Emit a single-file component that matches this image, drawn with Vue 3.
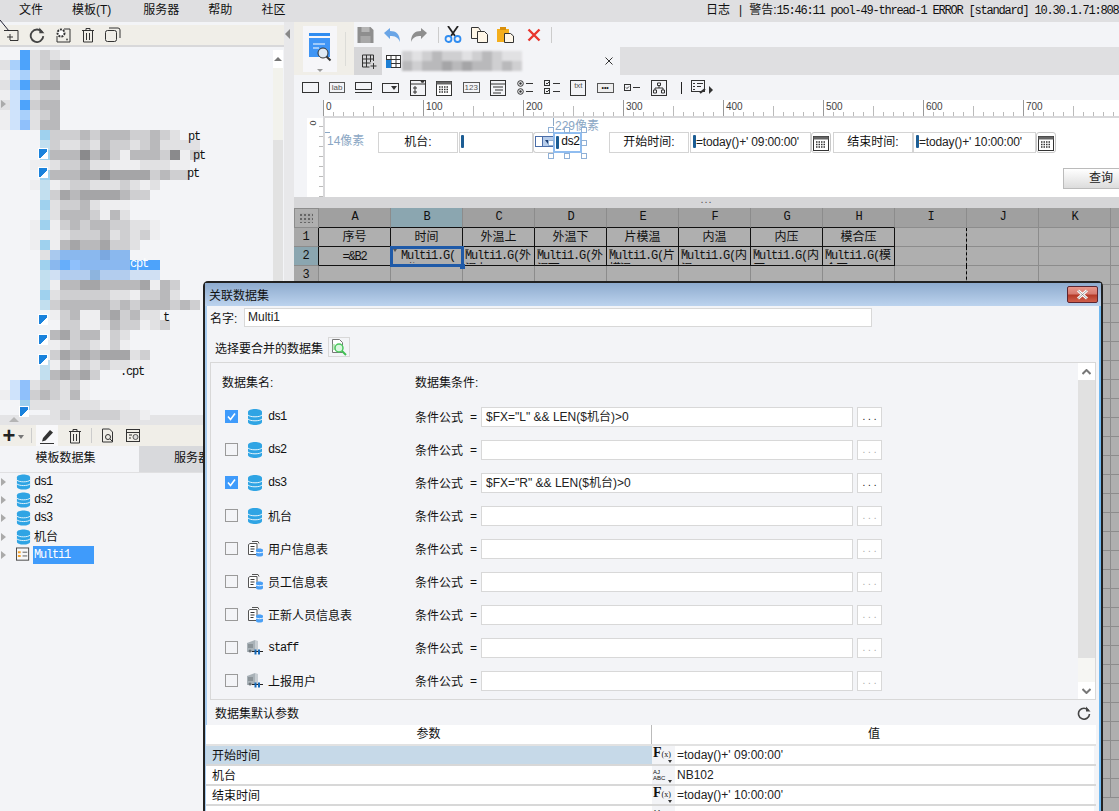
<script setup>
const menus = ['文件', '模板(T)', '服务器', '帮助', '社区']

const palette = {
  a: '#eeeef0', b: '#e1e1e3', c: '#cfcfd1', d: '#b9b9bb', e: '#a5a5a7', f: '#8a8a8c',
  B: '#4da3fb', L: '#a9d0fb', M: '#cfe3fb', H: '#8fc0fb', S: '#9fd1ee', T: '#c2dfef',
  P: '#a9c9ee', Q: '#8ab8ee', R: '#7ba8e0', O: '#66aefb', U: '#8fc0fb', W: '#8ab8f0',
  X: '#d0e0f3', Y: '#b3cdee', Z: '#8db4de'
}
const mosaicRows = [
  '..Bbcba.............', 'bLBbcde.............', 'aMLbbc..............', 'bLBdee..............',
  'aMLbcc..............', 'bMBcdd..............', 'aMLbcd..............', 'aMHbdd..............',
  '....Scccdcdddccdcb..', '....Tcbbcbdccbcdbbbb', '....Sdddfdecadddcfac', '...aabccdbbaaabbbaa.',
  '....Sdddeefeeeecdcc.', '...aTabccbbbcbab....', '....Tcedeeeedcc.....', '....Sbccdbaaa.......',
  '....Tbdddcadb.......', '...aSacdcddccbba....', '...aaabcccdbcbca....', '...aSadeddeccb......',
  '....bPQQQQRQQ.......', '....SQOUWWWWWBBB....', '....TXYYYZYYYXXX....', '....Taddeeddddeadc..',
  '....Sbcccccbbaccdb..', '....Tcdddddcdcdddcdc', '.....acdaadecdbb....', '......ccaabdccabc...',
  '.....decddacb.......', '....aabccbaca.......', '.....cededeeebc.....', '....Tacacbcbbaa.....',
  '....Tdedec..........', '.MHbccbca...........', 'aMHcdcbda...........', '..Sbbbbbbbaaa.......',
  '.....bcbccccbba.....'
]
const mosaic = mosaicRows.join('').split('').map((c) => palette[c] || 'transparent')
const tabMosaic = 'cbcdccbcdcbb'.split('').concat('dcddededdcdc'.split('')).map((c) => palette[c])

const treeRows = [
  { name: 'ds1', icon: 'db' }, { name: 'ds2', icon: 'db' }, { name: 'ds3', icon: 'db' },
  { name: '机台', icon: 'db', cjk: true }, { name: 'Multi1', icon: 'multi', picked: true }
]

const cols = ['A', 'B', 'C', 'D', 'E', 'F', 'G', 'H', 'I', 'J', 'K', 'L']
const heads = ['序号', '时间', '外温上', '外温下', '片模温', '内温', '内压', '模合压']
const forms = ['=&B2', 'Multi1.G(时间)', 'Multi1.G(外温上)', 'Multi1.G(外温下)', 'Multi1.G(片模温)', 'Multi1.G(内温)', 'Multi1.G(内压)', 'Multi1.G(模合压)']
const rowNums = Array.from({ length: 30 }, (_, i) => i + 1)

const datasets = [
  { name: 'ds1', icon: 'db', on: true, f: '$FX="L" && LEN($机台)>0', mono: true, live: true },
  { name: 'ds2', icon: 'db', on: false, f: '', mono: true },
  { name: 'ds3', icon: 'db', on: true, f: '$FX="R" && LEN($机台)>0', mono: true, live: true },
  { name: '机台', icon: 'db', on: false, f: '' },
  { name: '用户信息表', icon: 'tbl', on: false, f: '' },
  { name: '员工信息表', icon: 'tbl', on: false, f: '' },
  { name: '正新人员信息表', icon: 'tbl', on: false, f: '' },
  { name: 'staff', icon: 'srv', on: false, f: '', mono: true },
  { name: '上报用户', icon: 'srv', on: false, f: '' }
]

const params = [
  { k: '开始时间', v: "=today()+' 09:00:00'", t: 'fx', picked: true },
  { k: '机台', v: 'NB102', t: 'abc' },
  { k: '结束时间', v: "=today()+' 10:00:00'", t: 'fx' }
]
</script>

<template>
  <div class="app">
    <svg class="defs" width="0" height="0">
      <symbol id="db" viewBox="0 0 16 16">
        <path d="M1 3c0-4 14-4 14 0v10c0 4-14 4-14 0z" fill="#2fa4e4" />
        <path d="M1 6c2 2.400 12 2.400 14 0M1 10c2 2.400 12 2.400 14 0" fill="none" stroke="#e6f4fb" stroke-width="1" />
      </symbol>
      <symbol id="tbl" viewBox="0 0 16 16">
        <path d="M3 2.500h7v11H1.500v-10zM5 .5h6l1 2" fill="#fff" stroke="#555" />
        <path d="M3.500 5.500h4M3.500 8h4M3.500 10.500h3" stroke="#333" />
        <path d="M9 9c0-2 7-2 7 0v5c0 2-7 2-7 0z" fill="#4a9ff5" />
        <path d="M9 11c1 1 6 1 7 0" stroke="#fff" fill="none" />
      </symbol>
      <symbol id="srv" viewBox="0 0 16 16">
        <path d="M0 3l8-3v12H0z" fill="#a9b2b8" />
        <path d="M8 0l3 1v11H8z" fill="#c7cdd2" />
        <path d="M1 5h5M1 7h5" stroke="#6c7479" />
        <circle cx="3" cy="11" r="1.500" fill="#6c7479" />
        <path d="M5 11.500h11" stroke="#222" />
        <path d="M7.500 9.500h2v5h-2zM11 9.500h2v5h-2z" fill="#1669b8" />
      </symbol>
      <symbol id="multi" viewBox="0 0 16 16">
        <rect x=".5" y=".5" width="13" height="13" fill="#f8f8f8" stroke="#444" />
        <path d="M2 5h3M2 9h3" stroke="#f2a12e" stroke-width="2" />
        <path d="M7 5h5M7 9h5" stroke="#555" />
      </symbol>
      <symbol id="cal" viewBox="0 0 16 16">
        <rect x=".5" y="1.500" width="15" height="14" fill="#fff" stroke="#333" />
        <rect x=".5" y="1.500" width="15" height="3" fill="#666" />
        <path d="M3 7h10M3 9.500h10M3 12h10" stroke="#333" stroke-dasharray="1.500 1" stroke-width="1.500" />
      </symbol>
      <symbol id="reload" viewBox="0 0 14 14">
        <path d="M11.500 4.500A5.500 5.500 0 1 0 12.500 8" fill="none" stroke="#444" stroke-width="1.600" />
        <path d="M9 .5v5h4.500z" fill="#444" />
      </symbol>
      <symbol id="trash" viewBox="0 0 14 16">
        <path d="M1 3.500h12M5 3.500v-2h4v2M2.500 3.500v11.500h9V3.500M5.500 6v7M8.500 6v7" fill="none" stroke="#333" />
      </symbol>
      <symbol id="zoomdoc" viewBox="0 0 18 18">
        <path d="M2.500 1.500h7l3 3v10h-10z" fill="#fff" stroke="#777" />
        <path d="M2 7h3M2 9h3M2 11h3" stroke="#8c8" />
        <circle cx="9" cy="10" r="4" fill="#d9f7df" stroke="#4cc85e" stroke-width="1.500" />
        <path d="M12 13l4 4" stroke="#3fbf52" stroke-width="2" />
      </symbol>
    </svg>

    <header class="menubar">
      <nav class="menus"><span v-for="m in menus" :key="m" class="menu">{{ m }}</span></nav>
      <div class="log">日志<span class="logbar">|</span>警告:<span class="mono">15:46:11 pool-49-thread-1 ERROR [standard] 10.30.1.71:808</span></div>
    </header>

    <div class="main">
      <aside class="left">
        <div class="lefttop">
          <svg width="16" height="16" viewBox="0 0 16 16" class="lt1"><path d="M1 3.500h14v10H7M7 7v6M4 10h6" fill="none" stroke="#333" /></svg>
          <svg width="16" height="16"><use href="#reload" /></svg>
          <svg width="16" height="16" viewBox="0 0 16 16"><path d="M9 2h6v13H2V9" fill="none" stroke="#333" /><circle cx="6" cy="6" r="3.500" fill="#fff" stroke="#333" stroke-width="2" stroke-dasharray="2 1" /><circle cx="12" cy="12.500" r="1" fill="#555" /></svg>
          <svg width="14" height="16"><use href="#trash" /></svg>
          <svg width="16" height="16" viewBox="0 0 16 16"><rect x=".5" y="3.500" width="11" height="11" rx="2" fill="none" stroke="#333" /><path d="M4 1h9a2 2 0 0 1 2 2v8" fill="none" stroke="#333" /></svg>
        </div>
        <div class="tree">
          <div class="scroll">
            <div class="sbtn"><i class="up"></i></div>
            <div class="slight"></div>
            <div class="sdark"></div>
          </div>
          <div class="mosaic">
            <i v-for="(c, i) in mosaic" :key="i" :style="{ background: c }"></i>
          </div>
          <span class="frag f1 mono">pt</span>
          <span class="frag f2 mono">pt</span>
          <span class="frag f3 mono">pt</span>
          <span class="frag f4 mono">cpt</span>
          <span class="frag f5 mono">t</span>
          <span class="frag f6 mono">.cpt</span>
          <i class="fileicon i1"></i><i class="fileicon i2"></i><i class="fileicon i3"></i>
          <i class="fileicon i4"></i><i class="fileicon i5"></i><i class="fileicon i6"></i>
          <i class="t0"></i>
        </div>
        <div class="splitbar"><i class="tri-up"></i></div>
        <div class="dstool">
          <span class="plus">+</span><i class="caret"></i>
          <i class="vsep"></i>
          <span class="pen">
            <svg width="16" height="16" viewBox="0 0 16 16"><path d="M4 10l7-8 3 2.500-7.500 8-3.500 1z" fill="#333" /><path d="M1 15.500h14" stroke="#333" /></svg>
          </span>
          <svg class="dst2" width="14" height="16"><use href="#trash" /></svg>
          <i class="vsep"></i>
          <svg class="dst3" width="14" height="15" viewBox="0 0 14 15"><path d="M1.500 1h7l3 3v10h-10z" fill="none" stroke="#333" /><circle cx="7" cy="9" r="2.500" fill="none" stroke="#333" /><path d="M9 11l3 3" stroke="#333" /></svg>
          <svg class="dst4" width="15" height="15" viewBox="0 0 15 15"><rect x=".5" y="1.500" width="13" height="12" fill="none" stroke="#333" /><path d="M1 4.500h12M3 7h3M3 10h2" stroke="#333" /><circle cx="9.500" cy="9" r="2.500" fill="#ddd" stroke="#555" /></svg>
        </div>
        <div class="tabs2">
          <div class="tab2 on">模板数据集</div>
          <div class="tab2 off">服务器</div>
        </div>
        <ul class="dslist">
          <li v-for="r in treeRows" :key="r.name" class="dsitem">
            <i class="tri"></i>
            <svg width="15" height="16" class="dsi"><use :href="'#' + r.icon" /></svg>
            <span class="dsname" :class="{ picked: r.picked, mono: !r.cjk }">{{ r.name }}</span>
          </li>
        </ul>
      </aside>

      <div class="strip"><i class="tri-left"></i></div>

      <section class="right">
        <div class="topwrap">
          <div class="logoblock">
            <div class="logobox">
              <svg width="24" height="32" viewBox="0 0 24 32">
                <rect x="1" y="0" width="21" height="3" fill="#2f8cf0" />
                <path d="M1 5h21v19H1z" fill="#3f95f5" />
                <path d="M5 11h12M5 15h6" stroke="#fff" />
                <circle cx="15" cy="20" r="5" fill="#dfeaf5" stroke="#333" />
                <path d="M18.500 23.500l4 4" stroke="#333" stroke-width="2" />
              </svg>
              <i class="logocaret"></i>
            </div>
            <i class="logosep"></i>
          </div>
          <div class="toolcol">
            <div class="tools">
              <svg width="17" height="16" viewBox="0 0 16 16"><path d="M0 0h13l3 3v13H0z" fill="#8e8e8e" /><rect x="4" y="0" width="8" height="5" fill="#b5b5b5" /><rect x="3" y="9" width="10" height="7" fill="#a8a8a8" /></svg>
              <svg width="18" height="16" viewBox="0 0 18 16"><path d="M1 6l6-5v3c6 0 10 3 10 11-2-5-5-6-10-6v3z" fill="#6aa5e6" /></svg>
              <svg width="18" height="16" viewBox="0 0 18 16"><path d="M17 6l-6-5v3C5 4 1 7 1 15c2-5 5-6 10-6v3z" fill="#8e8e8e" /></svg>
              <i class="tsep"></i>
              <svg class="scis" width="18" height="17" viewBox="0 0 18 17"><path d="M4 0l7 10M14 0L7 10" stroke="#222" stroke-width="1.800" /><circle cx="4.500" cy="13" r="3" fill="none" stroke="#2f8cf0" stroke-width="1.800" /><circle cx="13.500" cy="13" r="3" fill="none" stroke="#2f8cf0" stroke-width="1.800" /></svg>
              <svg width="17" height="16" viewBox="0 0 17 16"><path d="M.5.5h7l2 3v8h-9z" fill="#fff7e8" stroke="#333" /><path d="M6.500 4.500h7l3 3v8h-10z" fill="#fff7e8" stroke="#333" /></svg>
              <svg width="17" height="16" viewBox="0 0 17 16"><rect x="0" y="2" width="12" height="13" fill="#f4ae1c" /><rect x="3" y="0" width="6" height="3" fill="#d98f0a" /><path d="M7.500 6.500h6l3 2.500v6.500h-9z" fill="#fff7e8" stroke="#333" /></svg>
              <svg class="del" width="14" height="14" viewBox="0 0 14 14"><path d="M1.500 1.500l11 11M12.500 1.500l-11 11" stroke="#e8352e" stroke-width="2.400" /></svg>
              <i class="tsep"></i>
            </div>
            <div class="tabbar">
              <div class="tabadd">
                <svg width="15" height="15" viewBox="0 0 15 15"><path d="M.5 1v12M4.500 1v12M8.500 1v7M.5 1h11v6M.5 5h11M.5 9h8M.5 13h7M11.500 9v6M8.500 12h6" fill="none" stroke="#333" /></svg>
              </div>
              <div class="tabon">
                <svg width="15" height="13" viewBox="0 0 15 13"><rect x=".5" y=".5" width="14" height="12" fill="#fff" stroke="#333" /><path d="M5 .5v12M10 .5v12M.5 4.500h14M.5 8.500h14" stroke="#333" /><rect x="0" y="5" width="5" height="8" fill="#1d7fd4" /></svg>
                <div class="tabmos"><i v-for="(c, i) in tabMosaic" :key="i" :style="{ background: c }"></i></div>
                <svg class="tabx" width="8" height="8" viewBox="0 0 8 8"><path d="M.5.5l7 7M7.500.5l-7 7" stroke="#333" /></svg>
              </div>
            </div>
          </div>
        </div>

        <div class="widgets">
          <i class="w wbox"></i>
          <span class="w wlab">lab</span>
          <svg class="w" width="17" height="11" viewBox="0 0 17 11"><rect x=".5" y=".5" width="16" height="7" fill="none" stroke="#333" /><path d="M0 10.500h17" stroke="#333" /></svg>
          <svg class="w" width="17" height="10" viewBox="0 0 17 10"><rect x=".5" y=".5" width="16" height="9" fill="none" stroke="#333" /><path d="M9 3h6l-3 4z" fill="#333" /></svg>
          <svg class="w" width="16" height="16" viewBox="0 0 16 16"><rect x=".5" y=".5" width="15" height="15" fill="none" stroke="#333" /><path d="M1 4h14M4 7h2v2H4zM4 11h2v2H4zM11 1.500h3L12.500 3z" stroke="#333" fill="none" /></svg>
          <svg class="w" width="16" height="16"><use href="#cal" /></svg>
          <span class="w w123">123</span>
          <svg class="w" width="16" height="16" viewBox="0 0 16 16"><rect x=".5" y=".5" width="15" height="15" fill="none" stroke="#333" /><path d="M1 4h14M3 7h10M5 10h8M3 13h8" stroke="#333" /></svg>
          <svg class="w" width="16" height="15" viewBox="0 0 16 15"><circle cx="3.500" cy="3.500" r="2.800" fill="none" stroke="#333" /><circle cx="3.500" cy="3.500" r="1.200" fill="#333" /><circle cx="3.500" cy="11.500" r="2.800" fill="none" stroke="#333" /><circle cx="3.500" cy="11.500" r="1.200" fill="#333" /><path d="M9 3.500h7M9 11.500h7" stroke="#333" /></svg>
          <svg class="w" width="16" height="15" viewBox="0 0 16 15"><rect x=".5" y=".5" width="5" height="5" fill="none" stroke="#333" /><rect x=".5" y="8.500" width="5" height="5" fill="none" stroke="#333" /><path d="M2 3l1 1 2-2M2 11l1 1 2-2M9 3.500h7M9 11.500h7" fill="none" stroke="#333" /></svg>
          <span class="w wtxt">txt</span>
          <span class="w wdots">•••</span>
          <svg class="w" width="16" height="8" viewBox="0 0 16 8"><rect x=".5" y=".5" width="6" height="6" fill="none" stroke="#333" /><path d="M2 3.500l1 1 2-2M9 3.500h7" fill="none" stroke="#333" /></svg>
          <svg class="w" width="16" height="16" viewBox="0 0 16 16"><rect x=".5" y=".5" width="15" height="15" fill="none" stroke="#333" /><path d="M6.500 3h3v2.500h-3zM2.500 10h3v3h-3zM10.500 10h3v3h-3zM8 5.500V8M4 10V8h8v2" fill="none" stroke="#333" /></svg>
          <i class="wsep"></i>
          <svg class="w" width="15" height="15" viewBox="0 0 15 15"><rect x=".5" y=".5" width="13" height="11" fill="none" stroke="#333" /><path d="M2 3.500h2M6 3.500h6M2 6.500h2M6 6.500h4M2 9.500h2" stroke="#333" /><path d="M9 13l5-4" stroke="#333" stroke-width="2" /></svg>
          <i class="warrow"></i>
        </div>

        <div class="ruler">
          <span v-for="n in [0, 100, 200, 300, 400, 500, 600, 700, 800]" :key="n" class="rulernum">{{ n === 800 ? '' : n }}</span>
        </div>

        <div class="design">
          <div class="vruler"><span class="vzero">0</span></div>
          <div class="canvas">
            <span class="hint h14">14像素</span>
            <span class="hint h229">229像素</span>
            <i class="hline hl14"></i><i class="hline hl229"></i>
            <div class="fw lab1">机台:</div>
            <div class="fw inp1"><i class="cursor"></i></div>
            <div class="fw drop"><svg width="19" height="11" viewBox="0 0 19 11"><rect x=".5" y=".5" width="7" height="10" fill="none" stroke="#4a6da8" /><rect x="7.500" y=".5" width="11" height="10" fill="#b7cdeb" stroke="#4a6da8" /><path d="M10 4h6l-3 4z" fill="#1d3d70" /></svg></div>
            <div class="fw selbox"><i class="cursor c2"></i><span class="seltext mono">ds2</span>
              <i class="hd a"></i><i class="hd b"></i><i class="hd c"></i><i class="hd d"></i><i class="hd e"></i><i class="hd f"></i><i class="hd g"></i><i class="hd h"></i>
            </div>
            <div class="fw lab2">开始时间:</div>
            <div class="fw inp2"><i class="cursor"></i>=today()+' 09:00:00'</div>
            <div class="fw cal1"><svg width="16" height="16"><use href="#cal" /></svg></div>
            <div class="fw lab3">结束时间:</div>
            <div class="fw inp3"><i class="cursor"></i>=today()+' 10:00:00'</div>
            <div class="fw cal2"><svg width="16" height="16"><use href="#cal" /></svg></div>
            <div class="fw query">查询</div>
          </div>
        </div>

        <div class="divider">...</div>

        <div class="sheet">
          <div class="hrow">
            <div class="corner"></div>
            <div v-for="(c, i) in cols" :key="c" class="colh mono" :class="{ hl: c === 'B', bx: i < 8 }"><template v-if="c !== 'L'">{{ c }}</template></div>
          </div>
          <div v-for="n in rowNums" :key="n" class="srow">
            <div class="rowh" :class="{ hl: n === 2 }"><template v-if="n <= 3">{{ n }}</template></div>
            <div v-for="(c, i) in cols" :key="c" class="cell"
              :class="{ boxed: n <= 2 && i < 8, cur: n === 2 && i === 1, dash: c === 'I' && n <= 4 }">
              <span v-if="n === 1 && i < 8" class="headtxt">{{ heads[i] }}</span>
              <span v-if="n === 2 && i === 0" class="fx0 mono">{{ forms[0] }}</span>
              <span v-if="n === 2 && i > 0 && i < 8" class="fx mono"><i class="mark"></i>{{ forms[i] }}</span>
              <i v-if="n === 2 && i === 1" class="handle"></i>
            </div>
          </div>
        </div>
      </section>
    </div>

    <svg class="cursorarrow" width="10" height="12" viewBox="0 0 10 12"><path d="M0 0l9 11" stroke="#223" stroke-width="1" /></svg>

    <div class="dialog">
      <div class="dtitle">
        <span>关联数据集</span>
        <div class="dclose"><svg width="15" height="11" viewBox="0 0 15 11"><path d="M3 1.500l9 8M12 1.500l-9 8" stroke="#fff" stroke-width="3" /><path d="M3 1.500l9 8M12 1.500l-9 8" stroke="#777" stroke-width=".7" /></svg></div>
      </div>
      <div class="dbody">
        <div class="namerow">
          <span class="namelab">名字:</span>
          <div class="nameinput">Multi1</div>
        </div>
        <div class="mergerow">
          <span>选择要合并的数据集</span>
          <span class="zoombtn"><svg width="18" height="18"><use href="#zoomdoc" /></svg></span>
        </div>
        <div class="panel">
          <div class="panelmain">
            <div class="phead"><span class="pcol1">数据集名:</span><span>数据集条件:</span></div>
            <div v-for="d in datasets" :key="d.name" class="prow">
              <span class="check" :class="{ on: d.on }">
                <svg v-if="d.on" width="13" height="13" viewBox="0 0 13 13"><path d="M3 6.500l2.500 3 4.500-6" fill="none" stroke="#fff" stroke-width="1.600" /></svg>
              </span>
              <svg class="picon" width="16" height="16"><use :href="'#' + d.icon" /></svg>
              <span class="pname" :class="{ mono: d.mono }">{{ d.name }}</span>
              <span class="cond">条件公式</span>
              <span class="eq">=</span>
              <div class="cinput">{{ d.f }}</div>
              <div class="cbtn" :class="{ live: d.live }">. . .</div>
            </div>
          </div>
          <div class="pscroll">
            <div class="pbtn"><svg width="9" height="6" viewBox="0 0 9 6"><path d="M.5 5l4-4 4 4" fill="none" stroke="#777" stroke-width="2" /></svg></div>
            <div class="ptrack"></div>
            <div class="pthumb"></div>
            <div class="pbtn"><svg width="9" height="6" viewBox="0 0 9 6"><path d="M.5 1l4 4 4-4" fill="none" stroke="#777" stroke-width="2" /></svg></div>
          </div>
        </div>
        <div class="paramhead">
          <span>数据集默认参数</span>
          <svg width="14" height="14"><use href="#reload" /></svg>
        </div>
        <div class="ptable">
          <div class="pth">
            <div class="pth1">参数</div>
            <div class="pth2">值</div>
          </div>
          <div v-for="p in params" :key="p.k" class="ptr">
            <div class="ptk" :class="{ picked: p.picked }">{{ p.k }}</div>
            <div class="ptype">
              <span v-if="p.t === 'fx'" class="fxglyph">F<small>(x)</small></span>
              <span v-else class="abcglyph">AJ<br />ABC</span>
              <i class="typecaret"></i>
            </div>
            <div class="ptv">{{ p.v }}</div>
          </div>
          <div class="ptr">
            <div class="ptk"></div>
            <div class="ptype"><span class="abcglyph">AJ</span></div>
            <div class="ptv"></div>
          </div>
        </div>
      </div>
    </div>
  </div>
</template>

<style>
html, body { margin: 0; padding: 0; overflow: hidden; }
</style>

<style scoped>
.app { position: relative; width: 1119px; height: 811px; overflow: hidden; background: #f3f4f7; color: #111; font: 12px "Liberation Sans", "Noto Sans CJK SC", sans-serif; display: flex; flex-direction: column; }
.defs { position: absolute; }
.mono { font-family: "Liberation Mono", "Noto Sans CJK SC", monospace; font-size: 12px; letter-spacing: -1.2px; }
i { display: block; font-style: normal; }
.cursorarrow { position: absolute; left: 0; top: 20px; }

.menubar { height: 22px; flex: none; background: #dfdfe1; display: flex; justify-content: space-between; }
.menus { display: flex; padding-left: 19px; }
.menu { line-height: 21px; margin-right: 29px; font-size: 12px; white-space: nowrap; }
.menu:nth-child(2) { margin-right: 32px; }
.log { line-height: 21px; white-space: nowrap; position: absolute; left: 706px; top: 0; font-size: 12px; }
.logbar { margin: 0 7px 0 9px; }

.main { flex: 1; display: flex; min-height: 0; }
.left { width: 284px; flex: none; display: flex; flex-direction: column; background: #f3f4f7; }
.lefttop { height: 20px; margin-top: 3px; background: #f0eee8; display: flex; align-items: center; gap: 9px; padding-left: 3px; border-bottom: 2px solid #d8d8da; flex: none; }
.lefttop svg { margin-right: 1px; }
.tree { position: relative; height: 365px; margin-top: 3px; flex: none; }
.scroll { position: absolute; right: 1px; top: 0; bottom: 0; width: 10px; display: flex; flex-direction: column; }
.sbtn { height: 18px; background: #fff; display: flex; align-items: center; justify-content: center; }
.up { width: 0; height: 0; border: 4px solid transparent; border-bottom-color: #777; border-top: 0; }
.slight { height: 72px; background: #f2f2ec; }
.sdark { flex: 1; background: #e2e2e2; }
.mosaic { position: absolute; left: 0; top: 0; width: 200px; display: grid; grid-template-columns: repeat(20, 10px); grid-auto-rows: 10px; }
.frag { position: absolute; line-height: 12px; }
.f1 { left: 188px; top: 81px; }
.f2 { left: 193px; top: 100px; }
.f3 { left: 187px; top: 118px; }
.f4 { left: 130px; top: 208px; color: #fff; }
.f5 { left: 163px; top: 262px; }
.f6 { left: 120px; top: 316px; }
.fileicon { position: absolute; left: 38px; width: 8px; height: 9px; background: linear-gradient(135deg, #1a82dc 60%, #fff 60%); border: 1px solid #fff; }
.i1 { top: 98px; }
.i2 { top: 117px; }
.i3 { top: 264px; }
.i4 { top: 284px; }
.i5 { top: 304px; }
.i6 { top: 356px; left: 19px; }
.tri, .t0 { width: 0; height: 0; border: 4px solid transparent; border-left: 5px solid #aaa; border-right: 0; }
.t0 { position: absolute; left: 1px; top: 50px; }
.splitbar { height: 10px; background: #e4e4e6; flex: none; display: flex; padding-left: 9px; padding-top: 2px; box-sizing: border-box; }
.tri-up { width: 0; height: 0; border: 5px solid transparent; border-top: 0; border-bottom: 5px solid #b5b5b5; }
.dstool { height: 21px; background: #f0eee8; display: flex; align-items: center; flex: none; padding-left: 2px; }
.plus { font-size: 22px; line-height: 18px; font-weight: 700; width: 14px; text-align: center; color: #222; }
.caret { width: 0; height: 0; border: 3px solid transparent; border-top: 4px solid #777; border-bottom: 0; margin: 2px 7px 0 2px; }
.vsep { width: 1px; height: 15px; background: #ccc; }
.pen { width: 22px; height: 21px; background: #f8f8fa; margin: 0 10px 0 4px; display: flex; align-items: center; justify-content: center; }
.dst2 { margin-right: 9px; }
.dst3 { margin: 0 11px 0 9px; }
.tabs2 { height: 26px; display: flex; flex: none; }
.tab2 { line-height: 25px; font-size: 12px; text-align: center; }
.tab2.on { width: 139px; background: #f3f4f7; padding-right: 8px; box-sizing: border-box; }
.tab2.off { width: 145px; background: #d8d9dc; text-align: left; padding-left: 35px; box-sizing: border-box; }
.dslist { list-style: none; margin: 0; padding: 0 0 0 1px; border-top: 1px solid #e0e0e2; }
.dsitem { height: 18.200px; display: flex; align-items: center; }
.dsi { margin-left: 10px; margin-right: 2px; }
.dsname { padding: 0 1px; line-height: 18px; }
.dsname.picked { background: #3f9bfb; color: #fff; width: 59px; }

.strip { width: 10px; flex: none; background: #e8e8ea; position: relative; }
.tri-left { position: absolute; left: 1px; top: 7px; width: 0; height: 0; border: 5px solid transparent; border-right: 5px solid #888; border-left: 0; }

.right { flex: 1; min-width: 0; display: flex; flex-direction: column; overflow: hidden; }
.topwrap { display: flex; height: 53px; flex: none; }
.logoblock { width: 60px; background: #f0eee8; flex: none; display: flex; align-items: center; position: relative; }
.logobox { width: 34px; height: 46px; background: #f6f6f9; margin-left: 9px; display: flex; flex-direction: column; align-items: center; padding-top: 7px; box-sizing: border-box; }
.logocaret { width: 0; height: 0; border: 3px solid transparent; border-top: 3px solid #999; border-bottom: 0; margin-top: 4px; }
.logosep { width: 1px; height: 34px; background: #dcdcd8; margin-left: 8px; }
.toolcol { flex: 1; display: flex; flex-direction: column; }
.tools { height: 25px; background: #f3f4f7; display: flex; align-items: center; padding-left: 3px; gap: 9px; }
.tsep { width: 1px; height: 16px; background: #ccc; margin: 0 1px; }
.scis { margin-left: -5px; }
.del { margin-left: 4px; }
.tabbar { height: 28px; background: #dfdfe1; display: flex; }
.tabadd { width: 28px; background: #d6d6d8; display: flex; align-items: center; justify-content: center; padding-left: 2px; box-sizing: border-box; }
.tabon { width: 238px; background: #f3f4f7; display: flex; align-items: center; padding-left: 4px; box-sizing: border-box; position: relative; }
.tabmos { display: grid; grid-template-columns: repeat(12, 10px); grid-auto-rows: 10px; margin-left: 1px; filter: blur(1px); }
.tabx { position: absolute; right: 7px; top: 10px; }

.widgets { height: 25px; background: #f3f4f7; flex: none; display: grid; grid-template-columns: repeat(14, 26.800px) 18px 17px 8px; align-items: center; justify-items: center; padding-left: 3px; }
.w { flex: none; }
.wbox { width: 15px; height: 9px; border: 1px solid #333; }
.wlab { width: 14px; height: 9px; border: 1px solid #555; font-size: 8px; line-height: 9px; text-align: center; color: #555; }
.w123 { width: 15px; height: 9px; border: 1px solid #555; font-size: 8px; line-height: 9px; color: #555; text-align: center; }
.wtxt { width: 14px; height: 14px; border: 1px solid #333; font-size: 8px; line-height: 9px; color: #555; text-align: center; }
.wdots { width: 15px; height: 8px; border: 1px solid #555; background: #eee; font-size: 7px; line-height: 8px; text-align: center; overflow: hidden; }
.wsep { width: 1px; height: 12px; background: #222; }
.warrow { width: 0; height: 0; border: 4px solid transparent; border-left: 4px solid #333; border-right: 0; margin-top: 4px; }

.ruler { height: 18px; flex: none; margin-left: 29px; background-color: #fff; display: flex; border-bottom: 2px solid #d8d8da; box-sizing: border-box;
  background-image: repeating-linear-gradient(90deg, #bbb 0 1px, transparent 1px 10px), repeating-linear-gradient(90deg, #bbb 0 1px, transparent 1px 50px);
  background-size: 100% 4px, 100% 10px; background-position: 0 100%, 0 100%; background-repeat: no-repeat; }
.rulernum { width: 100px; flex: none; box-sizing: border-box; border-left: 1px solid #999; padding-left: 2px; font-size: 10px; line-height: 14px; color: #444; height: 16px; }

.design { height: 79px; flex: none; display: flex; }
.vruler { width: 16px; margin-left: 13px; background-color: #fff; flex: none; position: relative;
  background-image: repeating-linear-gradient(0deg, #bbb 0 1px, transparent 1px 10px); background-size: 4px 100%; background-position: 100% 0; background-repeat: no-repeat; }
.vzero { position: absolute; left: 3px; top: 0; font-size: 9px; transform: rotate(90deg); color: #444; }
.canvas { flex: 1; position: relative; background: #fff; border-left: 2px solid #d8d8da; }
.hint { position: absolute; color: #8ba7c4; font-size: 12px; white-space: nowrap; }
.h14 { left: 2px; top: 13px; }
.h229 { left: 230px; top: -2px; }
.hline { position: absolute; background: #8ba7c4; }
.hl14 { left: 0; top: 14px; width: 5px; height: 1px; }
.hl229 { left: 228px; top: 0; width: 1px; height: 8px; }
.fw { position: absolute; box-sizing: border-box; height: 21px; line-height: 19px; white-space: nowrap; }
.lab1, .lab2, .lab3 { border: 1px solid #d4d4d4; text-align: center; font-size: 12px; }
.lab1 { left: 53px; top: 14px; width: 80px; }
.inp1 { left: 134px; top: 14px; width: 74px; border: 1px solid #d4d4d4; }
.cursor { display: inline-block; width: 3px; height: 13px; background: #1c5d94; border-radius: 1px; vertical-align: middle; margin: 0 0 2px 1px; }
.drop { left: 208px; top: 14px; width: 20px; border: 1px solid #d0d0d0; border-radius: 3px 0 0 3px; padding: 3px 0 0 1px; border-right: 0; line-height: 0; }
.selbox { left: 228px; top: 14px; width: 29px; border: 2px solid #90bdf0; line-height: 17px; }
.seltext { position: absolute; left: 6px; top: 0; }
.c2 { position: absolute; left: 1px; top: 2px; margin: 0; }
.hd { position: absolute; width: 6px; height: 6px; box-sizing: border-box; border: 1px solid #8fb0d6; background: #fff; }
.hd.a { left: -7px; top: -7px; }
.hd.b { left: 9px; top: -7px; }
.hd.c { left: 26px; top: -7px; }
.hd.d { left: -7px; top: 6px; }
.hd.e { left: 26px; top: 6px; }
.hd.f { left: -7px; top: 19px; }
.hd.g { left: 9px; top: 19px; }
.hd.h { left: 26px; top: 19px; }
.lab2 { left: 284px; top: 14px; width: 80px; }
.inp2 { left: 365px; top: 14px; width: 121px; border: 1px solid #d4d4d4; padding-left: 1px; color: #222; letter-spacing: -0.15px; }
.cal1, .cal2 { top: 14px; width: 20px; border: 1px solid #c8c8c8; border-radius: 3px; padding: 1px; line-height: 0; display: flex; justify-content: center; align-items: center; }
.cal1 { left: 486px; }
.lab3 { left: 508px; top: 14px; width: 80px; }
.inp3 { left: 588px; top: 14px; width: 123px; border: 1px solid #d4d4d4; padding-left: 1px; color: #222; letter-spacing: -0.15px; }
.cal2 { left: 711px; }
.query { left: 738px; top: 50px; width: 60px; border: 1px solid #bbb; background: linear-gradient(#fff, #dcdcdc); text-align: right; padding-right: 9px; color: #222; font-size: 12px; }

.divider { height: 11px; flex: none; background: #d6d6d8; text-align: center; line-height: 5px; font-size: 11px; color: #555; letter-spacing: 1px; }

.sheet { flex: 1; background: #afafaf; overflow: hidden; }
.hrow { display: flex; height: 20px; }
.srow { display: flex; height: 19px; }
.corner { width: 25px; flex: none; box-sizing: border-box; border: 1px solid #8c8c8c; background: #a8a8a8 radial-gradient(#666 40%, transparent 45%) 0 0 / 4px 4px; background-clip: content-box; padding: 4px 5px; }
.colh { width: 72px; flex: none; box-sizing: border-box; background: #a0a0a0; border-right: 1px solid #8c8c8c; border-bottom: 1px solid #8c8c8c; text-align: center; line-height: 19px; }
.colh.bx { border-bottom-color: #111; }
.colh.hl, .rowh.hl { background: #8ba6b0; }
.rowh { width: 25px; flex: none; box-sizing: border-box; background: #a8a8a8; border-bottom: 1px solid #8c8c8c; border-right: 1px solid #8c8c8c; text-align: center; line-height: 18px; font-family: "Liberation Mono", monospace; font-size: 12px; }
.cell { width: 72px; flex: none; box-sizing: border-box; border-right: 1px solid #8c8c8c; border-bottom: 1px solid #8c8c8c; position: relative; height: 19px; }
.boxed { border-right: 1px solid #111; border-bottom: 1px solid #111; }
.rowh:has(+ .boxed) { border-right-color: #111; }
.cur { outline: 3px solid #1f5aa8; outline-offset: -2px; z-index: 2; }
.handle { position: absolute; right: -3px; bottom: -4px; width: 5px; height: 5px; background: #1f5aa8; }
.dash::after { content: ""; position: absolute; right: -1px; top: 0; bottom: -1px; border-right: 1px dashed #000; }
.headtxt { display: block; text-align: center; font-size: 12px; line-height: 18px; }
.fx0 { display: block; text-align: center; line-height: 20px; }
.fx { display: block; position: absolute; left: 2px; top: 2px; right: 1px; height: 15px; overflow: hidden; line-height: 14px; word-break: break-all; line-break: anywhere; white-space: normal; }
.mark { position: absolute; left: 0; top: 0; width: 0; height: 0; border: 2px solid transparent; border-top: 3px solid #555; }
.cur .fx { padding-left: 8px; box-sizing: border-box; top: 2px; height: 14px; }

.dialog { position: absolute; left: 203px; top: 281px; width: 900px; height: 534px; box-sizing: border-box; border: 2px solid #222; border-bottom: 0; border-radius: 5px 5px 0 0; background: #f3f4f7; display: flex; flex-direction: column; }
.dtitle { height: 23px; flex: none; background: linear-gradient(#8eabce, #bcd3ee); display: flex; align-items: center; justify-content: space-between; padding-left: 4px; font-size: 12px; }
.dclose { width: 31px; height: 17px; margin-right: 3px; border-radius: 2px; border: 1px solid #5c2530; box-sizing: border-box; background: linear-gradient(#e8968a 0%, #d77b70 45%, #b53a28 55%, #d0604c 100%); display: flex; align-items: center; justify-content: center; }
.dbody { flex: 1; border-left: 2px solid #a9cdf0; border-right: 2px solid #6fb7ee; padding-left: 3px; display: flex; flex-direction: column; min-height: 0; }
.namerow { height: 22px; flex: none; display: flex; align-items: center; }
.namelab { width: 34px; margin-top: 1px; }
.nameinput { width: 628px; height: 19px; box-sizing: border-box; background: #fff; border: 1px solid #d8d8d8; line-height: 17px; padding-left: 3px; color: #222; }
.mergerow { height: 34px; flex: none; box-sizing: border-box; padding: 4px 0 0 5px; display: flex; align-items: center; gap: 5px; }
.zoombtn { width: 22px; height: 20px; border: 1px solid #d8d8d8; box-sizing: border-box; display: flex; align-items: center; justify-content: center; }
.panel { width: 886px; height: 338px; flex: none; box-sizing: border-box; border: 1px solid #d8d8d8; display: flex; justify-content: space-between; }
.panelmain { flex: 1; }
.phead { height: 37px; display: flex; align-items: center; padding-left: 11px; }
.pcol1 { width: 193px; }
.prow { height: 33px; display: flex; align-items: center; }
.check { width: 13px; height: 13px; box-sizing: border-box; border: 1px solid #9a9a9a; margin-left: 14px; line-height: 0; }
.check.on { background: #3f9bfb; border: 0; }
.picon { margin-left: 9px; }
.pname { width: 152px; padding-left: 5px; box-sizing: border-box; white-space: nowrap; }
.cond { width: 55px; }
.eq { width: 11px; }
.cinput { width: 372px; height: 20px; box-sizing: border-box; background: #fff; border: 1px solid #d8d8d8; line-height: 18px; padding-left: 4px; color: #222; }
.cbtn { width: 25px; height: 20px; margin-left: 4px; box-sizing: border-box; background: #fff; border: 1px solid #d8d8d8; text-align: center; line-height: 18px; font-size: 10px; color: #aaa; }
.cbtn.live { color: #111; }
.pscroll { width: 17px; flex: none; display: flex; flex-direction: column; }
.pbtn { height: 17px; flex: none; background: #fff; display: flex; align-items: center; justify-content: center; }
.ptrack { flex: 1; background: #e1e1e1; }
.pthumb { height: 24px; flex: none; background: #f6f6f3; }
.paramhead { height: 25px; flex: none; width: 881px; box-sizing: border-box; padding-left: 5px; display: flex; align-items: center; justify-content: space-between; }
.ptable { width: 890px; margin-left: -4px; }
.pth { height: 19px; display: flex; background: #fff; border-bottom: 2px solid #e2e2e2; }
.pth1 { width: 445px; text-align: center; line-height: 19px; border-right: 1px solid #bbb; }
.pth2 { flex: 1; text-align: center; line-height: 19px; }
.ptr { height: 20px; display: flex; border-bottom: 2px solid #d8d8d8; box-sizing: border-box; }
.ptk { width: 446px; background: #fff; line-height: 20px; box-sizing: border-box; padding-left: 6px; flex: none; }
.ptk.picked { background: #c6d9e8; }
.ptype { width: 23px; background: #f3f4f7; position: relative; flex: none; padding-left: 1px; box-sizing: border-box; overflow: hidden; }
.fxglyph { font: 700 14px/14px "Liberation Serif", serif; }
.fxglyph small { font-size: 8px; font-weight: 400; }
.abcglyph { display: block; font: 6px/6px "Liberation Sans", sans-serif; margin-top: 3px; }
.typecaret { position: absolute; right: 3px; bottom: 1px; width: 0; height: 0; border: 2px solid transparent; border-top: 3px solid #333; border-bottom: 0; }
.ptv { flex: 1; background: #fff; line-height: 18px; padding-left: 2px; margin-right: 2px; color: #222; }
</style>
